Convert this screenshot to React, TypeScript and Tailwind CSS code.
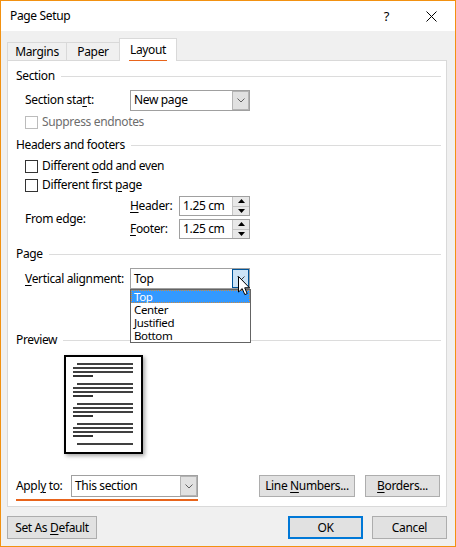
import React from "react";

function K({ children }: { children: React.ReactNode }) {
  return <span className="underline decoration-1 underline-offset-[2px]">{children}</span>;
}

function Chevron({ color = "#606060" }: { color?: string }) {
  return (
    <svg width="8" height="5" viewBox="0 0 8 5">
      <path d="M0.5 0.5 L4 4 L7.5 0.5" fill="none" stroke={color} strokeWidth="1" />
    </svg>
  );
}

function Combo({ value, active }: { value: string; active?: boolean }) {
  return (
    <div className="flex h-[21px] w-full border border-[#a0a0a0] bg-white">
      <div className="flex flex-1 items-center pl-[3px] leading-none">{value}</div>
      {active ? (
        <div className="flex w-[17px] items-center justify-center border border-[#005499] bg-[#cce4f7]">
          <Chevron color="#404040" />
        </div>
      ) : (
        <div className="flex w-[17px] items-center justify-center border border-[#b4b4b4] bg-[#e1e1e1]">
          <Chevron />
        </div>
      )}
    </div>
  );
}

function Heading({ label, className }: { label: string; className: string }) {
  return (
    <div className={`flex h-4 items-center pl-2 pr-[5px] ${className}`}>
      <span className="whitespace-nowrap leading-none">{label}</span>
      <div className="ml-[6px] h-px flex-1 bg-[#dcdcdc]" />
    </div>
  );
}

function Check({ label, disabled, className }: { label: React.ReactNode; disabled?: boolean; className: string }) {
  return (
    <div className={`flex h-[14px] items-center pl-[17px] ${className}`}>
      <span
        className={`h-[13px] w-[13px] border bg-white ${disabled ? "border-[#bcbcbc]" : "border-[#333333]"}`}
      />
      <span className={`ml-[4px] whitespace-nowrap leading-none ${disabled ? "text-[#6d6d6d]" : ""}`}>{label}</span>
    </div>
  );
}

function Spin({ value }: { value: string }) {
  return (
    <div className="flex h-[20px] w-[71px] border border-[#a0a0a0] bg-white">
      <div className="flex flex-1 items-center pl-[3px] leading-none">{value}</div>
      <div className="flex w-[17px] flex-col border-l border-[#c4c4c4] bg-[#e8e8e8]">
        <div className="flex flex-1 items-center justify-center border-b border-[#c4c4c4]">
          <svg width="7" height="4" viewBox="0 0 7 4">
            <path d="M0 4 L3.5 0 L7 4 Z" fill="#000" />
          </svg>
        </div>
        <div className="flex flex-1 items-center justify-center">
          <svg width="7" height="4" viewBox="0 0 7 4">
            <path d="M0 0 L3.5 4 L7 0 Z" fill="#000" />
          </svg>
        </div>
      </div>
    </div>
  );
}

function Btn({ children, className }: { children: React.ReactNode; className: string }) {
  return (
    <div
      className={`flex h-[22px] items-center justify-center border border-[#adadad] bg-[#e1e1e1] leading-none ${className}`}
    >
      <span className="whitespace-pre">{children}</span>
    </div>
  );
}

function Preview() {
  const groups = [9, 29, 49, 69];
  return (
    <div className="h-[99px] w-[79px] shadow-[2px_2px_4px_rgba(0,0,0,0.35)]">
      <svg width="79" height="99" viewBox="0 0 79 99">
        <rect x="1" y="1" width="77" height="97" fill="#fff" stroke="#000" strokeWidth="2" />
        {groups.map((g) => (
          <g key={g} stroke="#000" strokeWidth="1.6">
            <line x1="13" y1={g} x2="69" y2={g} />
            <line x1="9" y1={g + 4} x2="69" y2={g + 4} />
            <line x1="9" y1={g + 8} x2="69" y2={g + 8} />
            <line x1="9" y1={g + 12} x2="29" y2={g + 12} />
          </g>
        ))}
        <line x1="13" y1="89" x2="69" y2="89" stroke="#000" strokeWidth="1.6" />
      </svg>
    </div>
  );
}

function Cursor() {
  return (
    <svg width="13" height="20" viewBox="0 0 13 20">
      <path
        d="M0.5 0.5 L0.5 16 L4.2 12.6 L6.8 18.6 L9.2 17.6 L6.7 11.8 L11.5 11.8 Z"
        fill="#fff"
        stroke="#000"
        strokeWidth="1"
        strokeLinejoin="round"
      />
    </svg>
  );
}

export default function App() {
  return (
    <div className="flex h-[547px] w-[456px] flex-col border border-[#f29111] bg-white font-['Noto_Sans',sans-serif] text-[12px] tracking-[-0.35px] text-black">
      {/* Title bar */}
      <div className="flex h-[30px] items-center bg-white">
        <span className="ml-[9px] flex-1 leading-none">Page Setup</span>
        <span className="mr-[37px] text-[13px] leading-none">?</span>
        <svg width="11" height="11" viewBox="0 0 11 11" className="mr-[18px]">
          <path d="M0.5 0.5 L10.5 10.5 M10.5 0.5 L0.5 10.5" stroke="#000" strokeWidth="1" />
        </svg>
      </div>

      {/* Body */}
      <div className="flex flex-1 flex-col bg-[#f0f0f0] pl-[6px] pr-[8px] pt-[7px]">
        {/* Tabs */}
        <div className="flex h-[22px] items-end">
          <div className="flex h-[18px] w-[60px] items-center justify-center border border-b-0 border-[#d9d9d9] bg-[#f0f0f0] leading-none">
            Margins
          </div>
          <div className="flex h-[18px] w-[53px] items-center justify-center border border-b-0 border-l-0 border-[#d9d9d9] bg-[#f0f0f0] leading-none">
            Paper
          </div>
          <div className="relative z-10 -mb-px -ml-px flex h-[23px] w-[58px] flex-col items-center border border-b-0 border-[#d9d9d9] bg-white">
            <span className="mt-[5px] leading-none">Layout</span>
            <div className="mt-[4px] h-[2px] w-[38px] bg-[#e8641b]" />
          </div>
        </div>

        {/* Panel */}
        <div className="flex h-[447px] flex-col border border-[#d9d9d9] bg-white">
          <Heading label="Section" className="mt-[7px]" />

          <div className="mt-[5px] flex h-[22px] items-center pl-[17px]">
            <span className="w-[105px] whitespace-nowrap leading-none">
              Section sta<K>r</K>t:
            </span>
            <div className="w-[120px]">
              <Combo value="New page" />
            </div>
          </div>

          <Check label="Suppress endnotes" disabled className="mt-[4px]" />

          <Heading label="Headers and footers" className="mt-[8px]" />
          <Check
            label={
              <>
                Different <K>o</K>dd and even
              </>
            }
            className="mt-[6px]"
          />
          <Check
            label={
              <>
                Different first <K>p</K>age
              </>
            }
            className="mt-[5px]"
          />

          <div className="mt-[4px] flex items-center pl-[17px]">
            <span className="w-[105px] whitespace-nowrap pt-[2px] leading-none">From edge:</span>
            <div className="flex flex-col gap-[3px]">
              <div className="flex items-center">
                <span className="w-[49px] leading-none">
                  <K>H</K>eader:
                </span>
                <Spin value="1.25 cm" />
              </div>
              <div className="flex items-center">
                <span className="w-[49px] leading-none">
                  <K>F</K>ooter:
                </span>
                <Spin value="1.25 cm" />
              </div>
            </div>
          </div>

          <Heading label="Page" className="mt-[7px]" />

          <div className="mt-[6px] flex h-[21px] items-center pl-[17px]">
            <span className="w-[105px] whitespace-nowrap leading-none">
              <K>V</K>ertical alignment:
            </span>
            <div className="relative w-[120px]">
              <Combo value="Top" active />
              <div className="absolute left-0 top-[21px] z-20 flex w-[121px] flex-col border border-[#646464] bg-white text-[11.5px] leading-[11px]">
                <div className="flex h-[13px] items-center border border-dotted border-[#d08a3c] bg-[#3399ff] pl-[2px] text-white">
                  Top
                </div>
                <div className="flex h-[13px] items-center pl-[3px]">Center</div>
                <div className="flex h-[13px] items-center pl-[3px]">Justified</div>
                <div className="flex h-[13px] items-center pl-[3px]">Bottom</div>
              </div>
              <div className="absolute left-[108px] top-[8px] z-30">
                <Cursor />
              </div>
            </div>
          </div>

          <Heading label="Preview" className="mt-[43px]" />

          <div className="mt-[7px] pl-[56px]">
            <Preview />
          </div>

          <div className="mt-[21px] flex items-start pl-[8px] pr-[6px]">
            <div className="flex items-center border-b-2 border-[#e8641b] pb-[2px]">
              <span className="w-[55px] whitespace-nowrap leading-none">
                Appl<K>y</K> to:
              </span>
              <div className="w-[127px]">
                <div className="flex h-[22px] w-full border border-[#a0a0a0] bg-white">
                  <div className="flex flex-1 items-center pl-[3px] leading-none">This section</div>
                  <div className="flex w-[17px] items-center justify-center border border-[#b4b4b4] bg-[#e1e1e1]">
                    <Chevron />
                  </div>
                </div>
              </div>
            </div>
            <div className="flex-1" />
            <Btn className="w-[96px]">
              Line <K>N</K>umbers...
            </Btn>
            <Btn className="ml-[10px] w-[75px]">
              <K>B</K>orders...
            </Btn>
          </div>
        </div>

        {/* Bottom buttons */}
        <div className="mt-[9px] flex items-center">
          <Btn className="h-[23px] w-[90px]">
            Set As <K>D</K>efault
          </Btn>
          <div className="flex-1" />
          <div className="flex h-[23px] w-[75px] items-center justify-center border-2 border-[#0078d7] bg-[#e1e1e1] leading-none">
            OK
          </div>
          <Btn className="ml-[9px] h-[23px] w-[75px]">Cancel</Btn>
        </div>
      </div>
    </div>
  );
}
